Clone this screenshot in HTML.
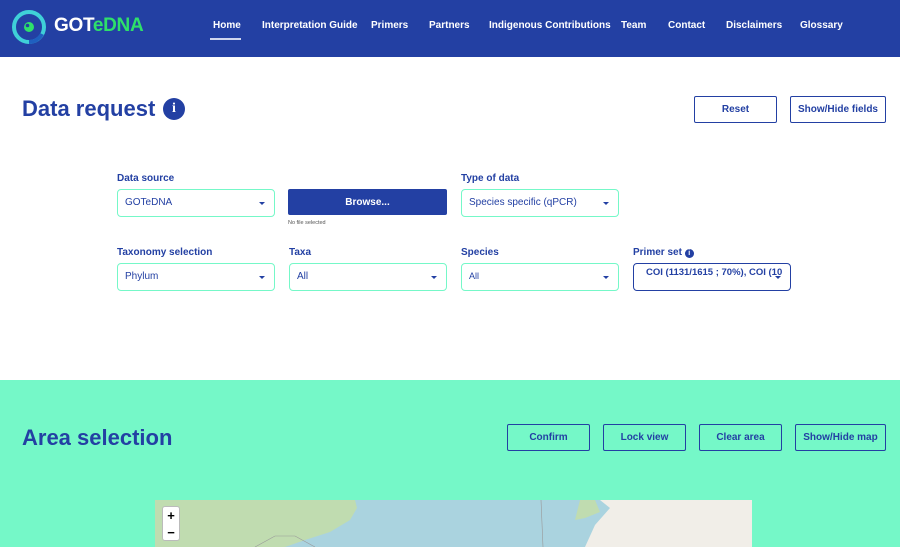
<!DOCTYPE html><html><head><style>
*{box-sizing:border-box;margin:0;padding:0}
body{width:900px;height:547px;overflow:hidden;font-family:"Liberation Sans",sans-serif;background:#fff;position:relative}
.hdr{position:absolute;left:0;top:0;width:900px;height:57px;background:#2340a3}
.nav{position:absolute;top:20px;color:#fff;font-size:10px;font-weight:bold;white-space:nowrap}
.a{position:absolute;color:#2340a3}
.lbl{position:absolute;font-size:10px;font-weight:bold;color:#2340a3}
.sel{position:absolute;width:158px;height:28px;border:1.5px solid #75f8c8;border-radius:4px;font-size:10px;color:#2340a3;padding:7px 7px}
.sel:after{content:"";position:absolute;right:9px;top:12px;border:3px solid transparent;border-top:3.5px solid #2340a3}
.btn{position:absolute;border:1.5px solid #2340a3;border-radius:2px;font-size:10px;font-weight:bold;color:#2340a3;display:flex;align-items:center;justify-content:center}
</style></head><body>
<div class="hdr">
<svg style="position:absolute;left:11px;top:9px" width="36" height="36" viewBox="0 0 36 36"><circle cx="18" cy="18" r="15" fill="none" stroke="#3fd0d8" stroke-width="4"/><path d="M18 33 A15 15 0 0 0 31 25" stroke="#1f5fc0" stroke-width="4" fill="none"/><circle cx="18" cy="18" r="5" fill="#2ee06a"/><circle cx="16.5" cy="16.5" r="1.8" fill="#2340a3"/></svg>
<div style="position:absolute;left:54px;top:15px;font-size:19px;font-weight:bold;color:#fff;letter-spacing:-0.3px">GOT<span style="color:#2ee06a">eDNA</span></div>
<div class="nav" style="left:213px">Home</div>
<div style="position:absolute;left:210px;top:38px;width:31px;height:2px;background:#cfd6ee"></div>
<div class="nav" style="left:262px">Interpretation Guide</div>
<div class="nav" style="left:371px">Primers</div>
<div class="nav" style="left:429px">Partners</div>
<div class="nav" style="left:489px">Indigenous Contributions</div>
<div class="nav" style="left:621px">Team</div>
<div class="nav" style="left:668px">Contact</div>
<div class="nav" style="left:726px">Disclaimers</div>
<div class="nav" style="left:800px">Glossary</div>
</div>
<div class="a" style="left:22px;top:96px;font-size:22px;font-weight:bold">Data request</div>
<div style="position:absolute;left:163px;top:98px;width:22px;height:22px;border-radius:50%;background:#2340a3;color:#fff;font-weight:bold;font-size:14px;text-align:center;line-height:22px;font-family:'Liberation Serif',serif">i</div>
<div class="btn" style="left:694px;top:96px;width:83px;height:27px">Reset</div>
<div class="btn" style="left:790px;top:96px;width:96px;height:27px">Show/Hide fields</div>
<div class="lbl" style="left:117px;top:173px">Data source</div>
<div class="sel" style="left:117px;top:189px">GOTeDNA</div>
<div style="position:absolute;left:288px;top:189px;width:159px;height:26px;background:#2340a3;border-radius:2px;color:#fff;font-size:10px;font-weight:bold;text-align:center;line-height:27px">Browse...</div>
<div style="position:absolute;left:288px;top:220px;font-size:5.5px;color:#555">No file selected</div>
<div class="lbl" style="left:461px;top:173px">Type of data</div>
<div class="sel" style="left:461px;top:189px">Species specific (qPCR)</div>
<div class="lbl" style="left:117px;top:247px">Taxonomy selection</div>
<div class="sel" style="left:117px;top:263px">Phylum</div>
<div class="lbl" style="left:289px;top:247px">Taxa</div>
<div class="sel" style="left:289px;top:263px">All</div>
<div class="lbl" style="left:461px;top:247px">Species</div>
<div class="sel" style="left:461px;top:263px;font-size:9px">All</div>
<div class="lbl" style="left:633px;top:247px">Primer set <span style="display:inline-block;width:9px;height:9px;border-radius:50%;background:#2340a3;color:#fff;font-size:7px;text-align:center;line-height:9px">i</span></div>
<div class="sel" style="left:633px;top:263px;border-color:#2340a3;padding:3px 0 0 12px;font-weight:bold;font-size:9.5px">COI (1131/1615 ; 70%), COI (10</div>
<div style="position:absolute;left:0;top:380px;width:900px;height:167px;background:#75f8c8"></div>
<div class="a" style="left:22px;top:425px;font-size:22px;font-weight:bold">Area selection</div>
<div class="btn" style="left:507px;top:424px;width:83px;height:27px">Confirm</div>
<div class="btn" style="left:603px;top:424px;width:83px;height:27px">Lock view</div>
<div class="btn" style="left:699px;top:424px;width:83px;height:27px">Clear area</div>
<div class="btn" style="left:795px;top:424px;width:91px;height:27px">Show/Hide map</div>
<svg style="position:absolute;left:155px;top:500px" width="597" height="47" viewBox="0 0 597 47"><rect width="597" height="47" fill="#aad3df"/><path d="M0 0H200 L202 8 L195 20 L175 32 L150 40 L130 47 H0Z" fill="#c0dcb0"/><path d="M445 0 H597 V47 H430 L440 25 L455 8Z" fill="#f1eee8"/><path d="M425 0 L440 0 L445 12 L430 18 L420 20Z" fill="#c0dcb0"/><path d="M386 0 L388 47" stroke="#999" stroke-width="0.6"/><path d="M100 47 L120 36 L140 36 L160 47" stroke="#999" fill="none" stroke-width="0.6"/></svg>
<div style="position:absolute;left:162px;top:506px;width:18px;height:35px;background:#fff;border:1px solid #bbb;border-radius:3px;font-size:13px;font-weight:bold;text-align:center;line-height:17px">+<br>−</div>
</body></html>
